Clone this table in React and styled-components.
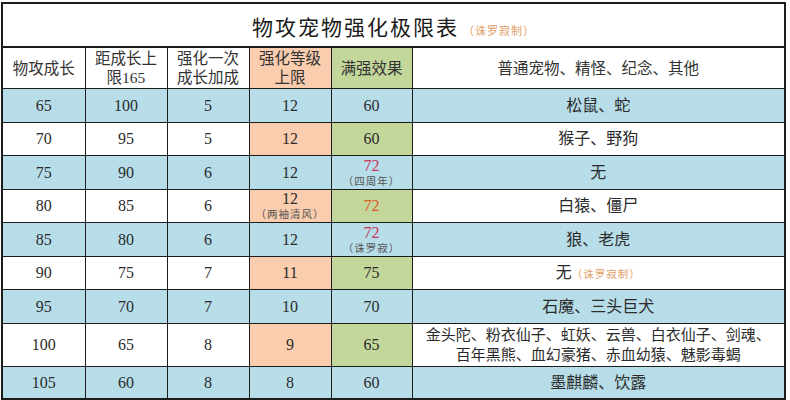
import styled, { createGlobalStyle } from "styled-components";

const GlobalStyle = createGlobalStyle`
  html, body {
    margin: 0;
    padding: 0;
    background: #fff;
  }
`;

const tones = {
  white: "#ffffff",
  blue: "#b7dde8",
  peach: "#f9cdad",
  green: "#c4d79b",
};

const Sheet = styled.table`
  margin: 2px 0 0 1px;
  width: 785px;
  border-collapse: collapse;
  table-layout: fixed;
  border: 2px solid #1c1c1c;
  font-family: "Liberation Serif", "Noto Sans CJK SC", serif;
  color: #262626;
`;

const TitleCell = styled.td`
  height: 40px;
  padding: 2px 0 0 0;
  text-align: center;
  border-bottom: 2px solid #1c1c1c;
  font-family: "Noto Sans CJK SC", sans-serif;
  font-size: 21px;
  letter-spacing: 2px;
  color: #1a1a1a;
`;

const TitleNote = styled.span`
  font-size: 11px;
  letter-spacing: 1px;
  color: #e0a068;
  margin-left: 4px;
`;

const HeadCell = styled.td`
  height: 40px;
  padding: 0;
  text-align: center;
  vertical-align: middle;
  border: 1px solid #1c1c1c;
  background: ${(p) => tones[p.$tone || "white"]};
  font-family: "Liberation Serif", "Noto Sans CJK SC", serif;
  font-size: 15.5px;
  line-height: 19px;
  color: #333;
`;

const Cell = styled.td`
  height: ${(p) => p.$h}px;
  padding: 0;
  text-align: center;
  vertical-align: middle;
  border: 1px solid #1c1c1c;
  background: ${(p) => tones[p.$tone]};
  font-size: ${(p) => (p.$wide ? 15 : 16)}px;
  line-height: ${(p) => (p.$wide ? 20 : 18)}px;
  color: #2b2b2b;
`;

const Stack = styled.div`
  display: flex;
  flex-direction: column;
  align-items: center;
  line-height: 15px;
`;

const Hot = styled.span`
  color: ${(p) => p.$color};
`;

const Note = styled.span`
  font-family: "Noto Sans CJK SC", sans-serif;
  font-size: 10.5px;
  color: ${(p) => p.$color || "#555"};
  letter-spacing: 1px;
`;

const MAGENTA = "#c4385e";
const ORANGE = "#e0582e";

const rows = [
  { v: [65, 100, 5, 12, 60], pets: "松鼠、蛇", tone: "blue", h: 33 },
  { v: [70, 95, 5, 12, 60], pets: "猴子、野狗", tone: "white", h: 32 },
  {
    v: [75, 90, 6, 12, { hot: 72, color: MAGENTA, note: "（四周年）" }],
    pets: "无",
    tone: "blue",
    h: 33,
  },
  {
    v: [80, 85, 6, { num: 12, note: "（两袖清风）" }, { hot: 72, color: ORANGE }],
    pets: "白猿、僵尸",
    tone: "white",
    h: 32,
  },
  {
    v: [85, 80, 6, 12, { hot: 72, color: MAGENTA, note: "（诛罗寂）" }],
    pets: "狼、老虎",
    tone: "blue",
    h: 33,
  },
  { v: [90, 75, 7, 11, 75], pets: "无", petNote: "（诛罗寂制）", tone: "white", h: 32 },
  { v: [95, 70, 7, 10, 70], pets: "石魔、三头巨犬", tone: "blue", h: 33 },
  {
    v: [100, 65, 8, 9, 65],
    pets: ["金头陀、粉衣仙子、虹妖、云兽、白衣仙子、剑魂、", "百年黑熊、血幻豪猪、赤血幼猿、魅影毒蝎"],
    tone: "white",
    h: 42,
  },
  { v: [105, 60, 8, 8, 60], pets: "墨麒麟、饮露", tone: "blue", h: 31 },
];

const cellTone = (rowTone, col) => {
  if (rowTone === "blue") return "blue";
  if (col === 3) return "peach";
  if (col === 4) return "green";
  return "white";
};

const renderValue = (val) => {
  if (typeof val !== "object") return val;
  if (val.hot) {
    if (!val.note) return <Hot $color={val.color}>{val.hot}</Hot>;
    return (
      <Stack>
        <Hot $color={val.color}>{val.hot}</Hot>
        <Note>{val.note}</Note>
      </Stack>
    );
  }
  return (
    <Stack>
      <span>{val.num}</span>
      <Note>{val.note}</Note>
    </Stack>
  );
};

const headers = [
  { text: ["物攻成长"] },
  { text: ["距成长上", "限165"] },
  { text: ["强化一次", "成长加成"] },
  { text: ["强化等级", "上限"], tone: "peach" },
  { text: ["满强效果"], tone: "green" },
  { text: ["普通宠物、精怪、纪念、其他"] },
];

const App = () => {
  return (
    <>
      <GlobalStyle />
      <Sheet>
        <colgroup>
          <col style={{ width: 83 }} />
          <col style={{ width: 82 }} />
          <col style={{ width: 82 }} />
          <col style={{ width: 82 }} />
          <col style={{ width: 81 }} />
          <col />
        </colgroup>
        <tbody>
          <tr>
            <TitleCell colSpan={6}>
              物攻宠物强化极限表
              <TitleNote>（诛罗寂制）</TitleNote>
            </TitleCell>
          </tr>
          <tr>
            {headers.map((h, i) => (
              <HeadCell key={i} $tone={h.tone}>
                {h.text.map((line, j) => (
                  <div key={j}>{line}</div>
                ))}
              </HeadCell>
            ))}
          </tr>
          {rows.map((row) => (
            <tr key={row.v[0]}>
              {row.v.map((val, col) => (
                <Cell key={col} $h={row.h} $tone={cellTone(row.tone, col)}>
                  {renderValue(val)}
                </Cell>
              ))}
              <Cell $h={row.h} $tone={row.tone} $wide={Array.isArray(row.pets)}>
                {Array.isArray(row.pets)
                  ? row.pets.map((line, j) => <div key={j}>{line}</div>)
                  : row.pets}
                {row.petNote && <Note $color="#e0a068">{row.petNote}</Note>}
              </Cell>
            </tr>
          ))}
        </tbody>
      </Sheet>
    </>
  );
};

export default App;
